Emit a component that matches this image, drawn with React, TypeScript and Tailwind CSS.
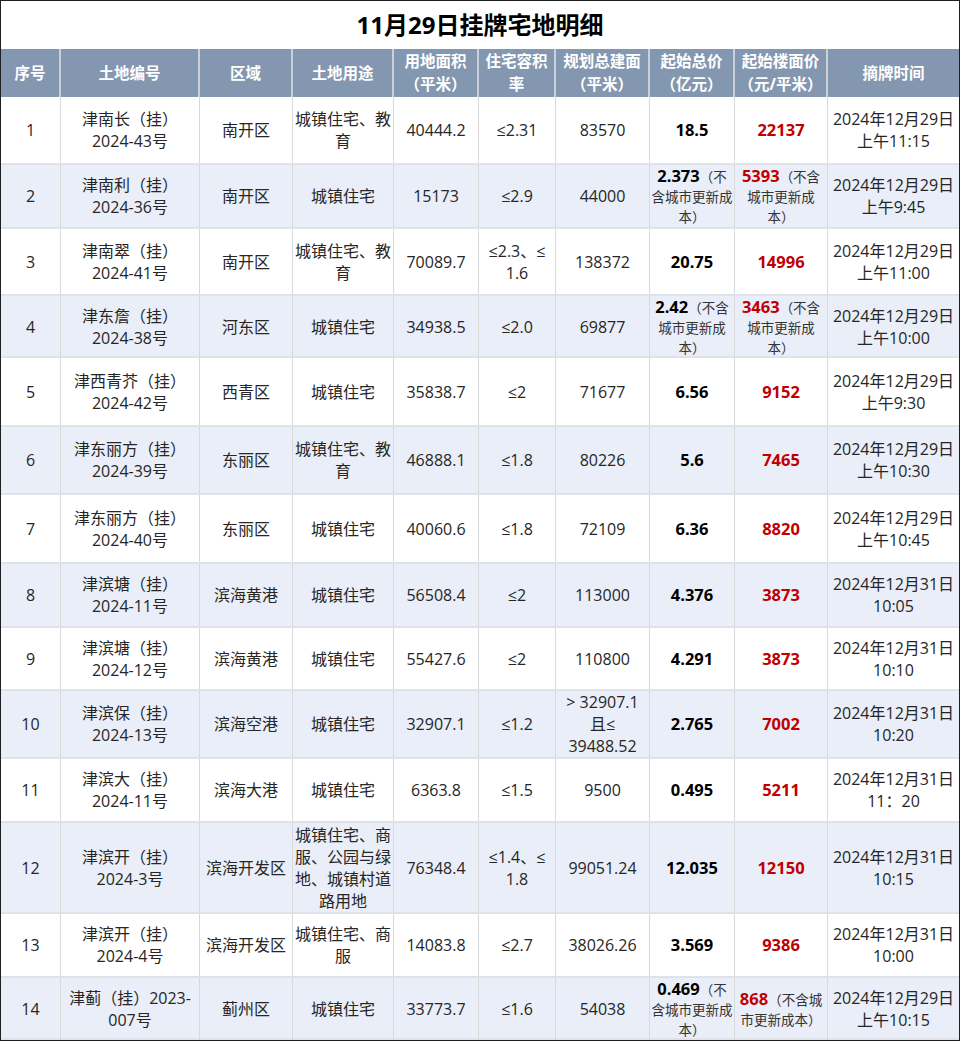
import React from 'react';

type Price = { v: string; note?: string[] };

type Row = {
  n: number;
  code: string[];
  area: string;
  use: string[];
  land: string;
  far: string[];
  build: string[];
  total: Price;
  unit: Price;
  time: string[];
  h: string;
  alt: boolean;
};

const cols = 'grid grid-cols-[60px_139px_93px_101px_85px_77px_94px_85px_93px_131px]';

const rows: Row[] = [
  { n: 1, code: ['津南长（挂）', '2024-43号'], area: '南开区', use: ['城镇住宅、教', '育'], land: '40444.2', far: ['≤2.31'], build: ['83570'], total: { v: '18.5' }, unit: { v: '22137' }, time: ['2024年12月29日', '上午11:15'], h: 'h-[68px]', alt: false },
  { n: 2, code: ['津南利（挂）', '2024-36号'], area: '南开区', use: ['城镇住宅'], land: '15173', far: ['≤2.9'], build: ['44000'], total: { v: '2.373', note: ['（不', '含城市更新成', '本）'] }, unit: { v: '5393', note: ['（不含', '城市更新成', '本）'] }, time: ['2024年12月29日', '上午9:45'], h: 'h-[64px]', alt: true },
  { n: 3, code: ['津南翠（挂）', '2024-41号'], area: '南开区', use: ['城镇住宅、教', '育'], land: '70089.7', far: ['≤2.3、≤', '1.6'], build: ['138372'], total: { v: '20.75' }, unit: { v: '14996' }, time: ['2024年12月29日', '上午11:00'], h: 'h-[67px]', alt: false },
  { n: 4, code: ['津东詹（挂）', '2024-38号'], area: '河东区', use: ['城镇住宅'], land: '34938.5', far: ['≤2.0'], build: ['69877'], total: { v: '2.42', note: ['（不含', '城市更新成', '本）'] }, unit: { v: '3463', note: ['（不含', '城市更新成', '本）'] }, time: ['2024年12月29日', '上午10:00'], h: 'h-[62px]', alt: true },
  { n: 5, code: ['津西青芥（挂）', '2024-42号'], area: '西青区', use: ['城镇住宅'], land: '35838.7', far: ['≤2'], build: ['71677'], total: { v: '6.56' }, unit: { v: '9152' }, time: ['2024年12月29日', '上午9:30'], h: 'h-[69px]', alt: false },
  { n: 6, code: ['津东丽方（挂）', '2024-39号'], area: '东丽区', use: ['城镇住宅、教', '育'], land: '46888.1', far: ['≤1.8'], build: ['80226'], total: { v: '5.6' }, unit: { v: '7465' }, time: ['2024年12月29日', '上午10:30'], h: 'h-[68px]', alt: true },
  { n: 7, code: ['津东丽方（挂）', '2024-40号'], area: '东丽区', use: ['城镇住宅'], land: '40060.6', far: ['≤1.8'], build: ['72109'], total: { v: '6.36' }, unit: { v: '8820' }, time: ['2024年12月29日', '上午10:45'], h: 'h-[69px]', alt: false },
  { n: 8, code: ['津滨塘（挂）', '2024-11号'], area: '滨海黄港', use: ['城镇住宅'], land: '56508.4', far: ['≤2'], build: ['113000'], total: { v: '4.376' }, unit: { v: '3873' }, time: ['2024年12月31日', '10:05'], h: 'h-[64px]', alt: true },
  { n: 9, code: ['津滨塘（挂）', '2024-12号'], area: '滨海黄港', use: ['城镇住宅'], land: '55427.6', far: ['≤2'], build: ['110800'], total: { v: '4.291' }, unit: { v: '3873' }, time: ['2024年12月31日', '10:10'], h: 'h-[63px]', alt: false },
  { n: 10, code: ['津滨保（挂）', '2024-13号'], area: '滨海空港', use: ['城镇住宅'], land: '32907.1', far: ['≤1.2'], build: ['> 32907.1', '且≤', '39488.52'], total: { v: '2.765' }, unit: { v: '7002' }, time: ['2024年12月31日', '10:20'], h: 'h-[68px]', alt: true },
  { n: 11, code: ['津滨大（挂）', '2024-11号'], area: '滨海大港', use: ['城镇住宅'], land: '6363.8', far: ['≤1.5'], build: ['9500'], total: { v: '0.495' }, unit: { v: '5211' }, time: ['2024年12月31日', '11：20'], h: 'h-[64px]', alt: false },
  { n: 12, code: ['津滨开（挂）', '2024-3号'], area: '滨海开发区', use: ['城镇住宅、商', '服、公园与绿', '地、城镇村道', '路用地'], land: '76348.4', far: ['≤1.4、≤', '1.8'], build: ['99051.24'], total: { v: '12.035' }, unit: { v: '12150' }, time: ['2024年12月31日', '10:15'], h: 'h-[91px]', alt: true },
  { n: 13, code: ['津滨开（挂）', '2024-4号'], area: '滨海开发区', use: ['城镇住宅、商', '服'], land: '14083.8', far: ['≤2.7'], build: ['38026.26'], total: { v: '3.569' }, unit: { v: '9386' }, time: ['2024年12月31日', '10:00'], h: 'h-[64px]', alt: false },
  { n: 14, code: ['津蓟（挂）2023-', '007号'], area: '蓟州区', use: ['城镇住宅'], land: '33773.7', far: ['≤1.6'], build: ['54038'], total: { v: '0.469', note: ['（不', '含城市更新成', '本）'] }, unit: { v: '868', note: ['（不含城', '市更新成本）'] }, time: ['2024年12月29日', '上午10:15'], h: 'h-[62px]', alt: true },
];

const headers = [
  ['序号'],
  ['土地编号'],
  ['区域'],
  ['土地用途'],
  ['用地面积', '（平米）'],
  ['住宅容积', '率'],
  ['规划总建面', '（平米）'],
  ['起始总价', '（亿元）'],
  ['起始楼面价', '（元/平米）'],
  ['摘牌时间'],
];

const Lines = ({ lines }: { lines: string[] }) => (
  <>
    {lines.map((l, i) => (
      <React.Fragment key={i}>
        {i > 0 && <br />}
        {l}
      </React.Fragment>
    ))}
  </>
);

const Cell = ({ children, last }: { children: React.ReactNode; last?: boolean }) => (
  <div className={`flex items-center justify-center text-center whitespace-nowrap ${last ? '' : 'border-r border-[#d9d9d9]'}`}>
    {children}
  </div>
);

const PriceCell = ({ p, red }: { p: Price; red?: boolean }) => {
  const color = red ? 'text-[#c00000]' : 'text-black';
  if (!p.note) {
    return <span className={`font-bold text-[16.5px] ${color}`}>{p.v}</span>;
  }
  const [first, ...rest] = p.note;
  return (
    <div className="leading-[20px] text-[13.5px] text-[#333]">
      <span className={`font-bold text-[16.5px] leading-[22px] ${color}`}>{p.v}</span>
      {first}
      {rest.map((l, i) => (
        <React.Fragment key={i}>
          <br />
          {l}
        </React.Fragment>
      ))}
    </div>
  );
};

export default function App() {
  return (
    <div className="w-[960px] h-[1041px] bg-white border border-[#1f1f1f] font-['Open_Sans','Noto_Sans_CJK_SC',sans-serif] text-[#262626] overflow-hidden">
      <div className="h-[48px] flex items-center justify-center text-[24px] font-bold text-black">
        11月29日挂牌宅地明细
      </div>

      <div className={`${cols} h-[48px] bg-[#8497b0] text-white font-bold text-[15.5px] leading-[23px]`}>
        {headers.map((h, i) => (
          <div
            key={i}
            className={`flex items-center justify-center text-center ${i < headers.length - 1 ? 'border-r-2 border-[#c9d0da]' : ''}`}
          >
            <div>
              <Lines lines={h} />
            </div>
          </div>
        ))}
      </div>

      {rows.map((r) => (
        <div
          key={r.n}
          className={`${cols} ${r.h} border-b-2 border-[#dfe2e6] ${r.alt ? 'bg-[#e9eef8]' : 'bg-white'} text-[16px] leading-[22px]`}
        >
          <Cell>{r.n}</Cell>
          <Cell>
            <div><Lines lines={r.code} /></div>
          </Cell>
          <Cell>{r.area}</Cell>
          <Cell>
            <div><Lines lines={r.use} /></div>
          </Cell>
          <Cell>{r.land}</Cell>
          <Cell>
            <div><Lines lines={r.far} /></div>
          </Cell>
          <Cell>
            <div><Lines lines={r.build} /></div>
          </Cell>
          <Cell>
            <PriceCell p={r.total} />
          </Cell>
          <Cell>
            <PriceCell p={r.unit} red />
          </Cell>
          <Cell last>
            <div><Lines lines={r.time} /></div>
          </Cell>
        </div>
      ))}
    </div>
  );
}
